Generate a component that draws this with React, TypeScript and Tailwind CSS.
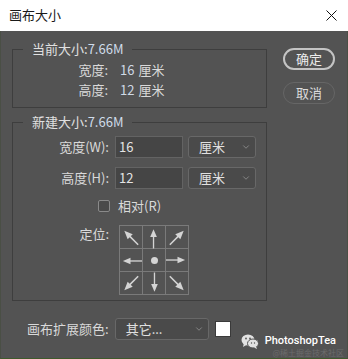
import { ChevronDown } from "lucide-react";

const label = "text-[#d9d9d9]";

function Arrow({ dir }: { dir: "n" | "e" | "s" | "w" | "nw" | "ne" | "se" | "sw" }) {
  const straight = dir.length === 1;
  const rot: Record<string, number> = { n: 0, e: 90, s: 180, w: 270, nw: 0, ne: 90, se: 180, sw: 270 };
  return (
    <svg width="23" height="23" viewBox="0 0 23 23" className="block">
      <g transform={`rotate(${rot[dir]} 11.5 11.5)`} fill="#d4d4d4" stroke="#d4d4d4">
        {straight ? (
          <>
            <line x1="11" y1="23" x2="11" y2="9" strokeWidth="1.4" />
            <polygon points="11,3 7.5,11 14.5,11" stroke="none" />
          </>
        ) : (
          <>
            <line x1="19" y1="19" x2="9" y2="9" strokeWidth="1.6" />
            <polygon points="4.5,4.5 13.3,8 8,13.3" stroke="none" />
          </>
        )}
      </g>
    </svg>
  );
}

function Select({ text, w }: { text: string; w: string }) {
  return (
    <div className={`${w} h-[22px] flex items-center justify-between pl-[10px] pr-[4px] bg-[#4a4a4a] border border-[#686868] rounded-[3px] text-[#e0e0e0]`}>
      <span>{text}</span>
      <ChevronDown className="size-[10px] text-[#a8a8a8]" strokeWidth={1.5} />
    </div>
  );
}

export default function App() {
  const cells: ("n" | "e" | "s" | "w" | "nw" | "ne" | "se" | "sw" | "c")[] = ["nw", "n", "ne", "w", "c", "e", "sw", "s", "se"];

  return (
    <div className="w-[348px] h-[359px] flex flex-col bg-[#535353] text-[13px] leading-[18px] font-['Microsoft_YaHei','Noto_Sans_CJK_SC',sans-serif] relative overflow-hidden">
      {/* title bar */}
      <div className="h-[31px] shrink-0 bg-white flex items-center justify-between pl-[9px] pr-[11px] text-[#1a1a1a]">
        <span className="mt-[-1px]">画布大小</span>
        <svg width="11" height="11" viewBox="0 0 11 11">
          <path d="M0.5 0.5 L10.5 10.5 M10.5 0.5 L0.5 10.5" stroke="#111" strokeWidth="1" />
        </svg>
      </div>

      <div className="flex-1 flex border-x border-b border-x-[#4a4f45] border-b-[#3f5a2b]">
        <div className="ml-[11px] w-[255px]">
          {/* current size */}
          <fieldset className="mt-[9px] border border-[#3e3e3e] h-[68px]">
            <legend className="ml-[10px] px-[9px] text-[#e0e0e0]">
              当前大小:<span className="text-[#cfdcea]">7.66M</span>
            </legend>
            <div className="flex flex-col pt-[2px]">
              <div className="flex h-[20px] items-center">
                <span className={`w-[95px] text-right ${label}`}>宽度:</span>
                <span className="ml-[12px] text-[#d0dae6]">16</span>
                <span className={`ml-[4px] ${label}`}>厘米</span>
              </div>
              <div className="flex h-[20px] items-center">
                <span className={`w-[95px] text-right ${label}`}>高度:</span>
                <span className="ml-[12px] text-[#d0dae6]">12</span>
                <span className={`ml-[4px] ${label}`}>厘米</span>
              </div>
            </div>
          </fieldset>

          {/* new size */}
          <fieldset className="mt-[5px] border border-[#3e3e3e] h-[188px]">
            <legend className="ml-[10px] px-[9px] text-[#e0e0e0]">
              新建大小:<span className="text-[#cfdcea]">7.66M</span>
            </legend>
            <div className="flex flex-col pt-[5px]">
              <div className="flex items-center h-[22px]">
                <span className={`w-[96px] text-right ${label}`}>宽度(W):</span>
                <div className="ml-[6px] w-[68px] h-[22px] bg-[#454545] border border-[#636363] pl-[3px] flex items-center text-[#e4e4e4]">16</div>
                <div className="ml-[5px]">
                  <Select text="厘米" w="w-[68px]" />
                </div>
              </div>
              <div className="flex items-center h-[22px] mt-[9px]">
                <span className={`w-[96px] text-right ${label}`}>高度(H):</span>
                <div className="ml-[6px] w-[68px] h-[22px] bg-[#454545] border border-[#636363] pl-[3px] flex items-center text-[#e4e4e4]">12</div>
                <div className="ml-[5px]">
                  <Select text="厘米" w="w-[68px]" />
                </div>
              </div>
              <div className="flex items-center h-[18px] mt-[8px]">
                <div className="ml-[85px] size-[12px] rounded-[2px] border border-[#8a8a8a] bg-[#4a4a4a]" />
                <span className={`ml-[8px] ${label}`}>相对(R)</span>
              </div>
              <div className="flex mt-[10px]">
                <span className={`w-[96px] text-right ${label}`}>定位:</span>
                <div className="ml-[10px] grid grid-cols-[repeat(3,23px)] grid-rows-[repeat(3,23px)] border-l border-t border-[#7a7a7a]">
                  {cells.map((c, i) => (
                    <div key={i} className="border-r border-b border-[#7a7a7a] flex items-center justify-center">
                      {c === "c" ? (
                        <div className="size-[7px] rounded-full bg-[#d4d4d4]" />
                      ) : (
                        <Arrow dir={c} />
                      )}
                    </div>
                  ))}
                </div>
              </div>
            </div>
          </fieldset>

          {/* canvas extension color */}
          <div className="flex items-center mt-[17px]">
            <span className={`ml-[15px] ${label}`}>画布扩展颜色:</span>
            <div className="ml-[6px]">
              <Select text="其它..." w="w-[94px]" />
            </div>
            <div className="ml-[6px] size-[16px] bg-white border border-[#3a3a3a]" />
          </div>
        </div>

        {/* buttons */}
        <div className="ml-[16px] mt-[17px] flex flex-col gap-[12px]">
          <button className="w-[52px] h-[22px] rounded-full border-2 border-[#c4c4c4] text-[#ececec] flex items-center justify-center">确定</button>
          <button className="w-[52px] h-[22px] rounded-full border border-[#666666] text-[#dcdcdc] flex items-center justify-center">取消</button>
        </div>
      </div>

      {/* watermark */}
      <div className="absolute right-[12px] bottom-[9px] flex items-center gap-[6px]">
        <svg width="18" height="15" viewBox="0 0 18 15">
          <ellipse cx="7" cy="6" rx="6.5" ry="5.5" fill="#e2e2e2" />
          <polygon points="3,9 2,13 6,10.5" fill="#e2e2e2" />
          <ellipse cx="12" cy="9.5" rx="5.5" ry="4.5" fill="#e2e2e2" stroke="#535353" strokeWidth="1" />
          <polygon points="15,12.5 16,15 13,13.5" fill="#e2e2e2" />
          <circle cx="5" cy="4.5" r="0.9" fill="#535353" />
          <circle cx="9" cy="4.5" r="0.9" fill="#535353" />
          <circle cx="10.5" cy="9" r="0.7" fill="#535353" />
          <circle cx="13.5" cy="9" r="0.7" fill="#535353" />
        </svg>
        <span className="text-[11px] font-medium text-white font-['Roboto',sans-serif]">PhotoshopTea</span>
      </div>
      <div className="absolute right-[4px] bottom-[1px] text-[8px] leading-[10px] text-[#6c6c6c]">@稀土掘金技术社区</div>
    </div>
  );
}
